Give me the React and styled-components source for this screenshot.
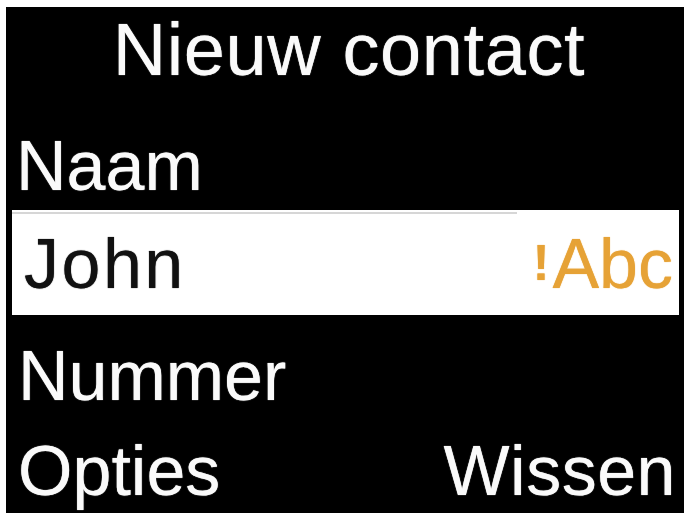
import styled, { createGlobalStyle } from 'styled-components';

const GlobalStyle = createGlobalStyle`
  html, body {
    margin: 0;
    padding: 0;
    background: #fff;
  }
  body {
    font-family: 'Liberation Sans', Arial, sans-serif;
  }
`;

const Screen = styled.div`
  margin: 7px 3px 0 6px;
  width: 678px;
  height: 506px;
  background: #000;
  color: #fafafa;
  display: flex;
  flex-direction: column;
  overflow: hidden;
  filter: blur(0.5px);
  text-shadow: 0 0 1px currentColor;
`;

const Title = styled.h1`
  margin: 0;
  padding-left: 8px;
  font-size: 74px;
  font-weight: 400;
  line-height: 85px;
  height: 85px;
  text-align: center;
  letter-spacing: 0.6px;
`;

const Label = styled.div`
  font-size: 70px;
  line-height: 78px;
  padding: ${(p) => p.$top}px 10px 0 ${(p) => p.$left || 12}px;
  margin-bottom: ${(p) => p.$bottom || 0}px;
`;

const Input = styled.div`
  position: relative;
  box-sizing: border-box;
  height: 105px;
  margin: 0 5px 0 6px;
  padding: 15px 6px 0 12px;
  background: #fff;
  color: #111;
  display: flex;
  justify-content: space-between;
  font-size: 70px;
  line-height: 78px;

  &::before {
    content: '';
    position: absolute;
    top: 2px;
    left: 0;
    width: 505px;
    height: 2px;
    background: #d6d6d6;
  }
`;

const Value = styled.span`
  letter-spacing: 2.5px;
`;

const Mode = styled.span`
  color: #e6a236;
  display: flex;
  align-items: baseline;
`;

const Mark = styled.span`
  font-size: 50px;
  font-weight: 700;
  position: relative;
  top: -8px;
  margin-right: 3px;
`;

const SoftKeys = styled.div`
  display: flex;
  justify-content: space-between;
  font-size: 70px;
  line-height: 78px;
  padding: 17px 8px 0 12px;
`;

const Key = styled.span`
  letter-spacing: ${(p) => p.$spacing || 0}px;
`;

export default function App() {
  return (
    <>
      <GlobalStyle />
      <Screen>
        <Title>Nieuw contact</Title>
        <Label $top={35} $bottom={5} $left={10}>Naam</Label>
        <Input>
          <Value>John</Value>
          <Mode>
            <Mark>!</Mark>Abc
          </Mode>
        </Input>
        <Label $top={22}>Nummer</Label>
        <SoftKeys>
          <Key>Opties</Key>
          <Key $spacing={0.5}>Wissen</Key>
        </SoftKeys>
      </Screen>
    </>
  );
}
